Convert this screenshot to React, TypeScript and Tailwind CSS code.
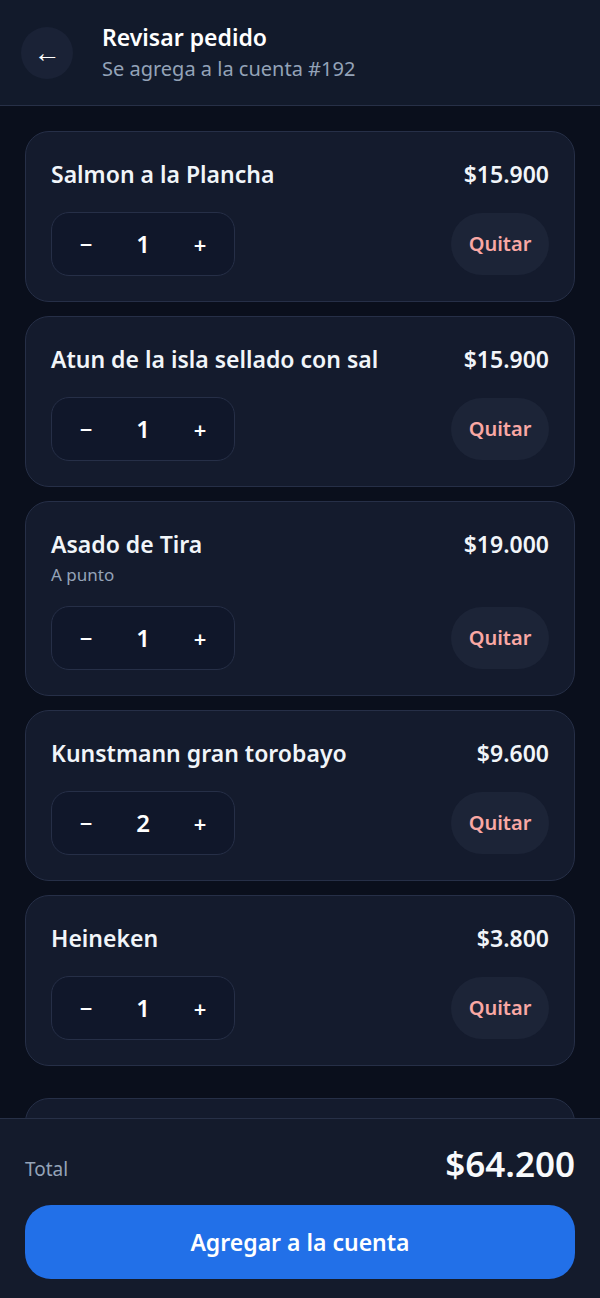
interface Item {
  name: string
  note?: string
  price: string
  qty: number
}

const ITEMS: Item[] = [
  { name: 'Salmon a la Plancha', price: '$15.900', qty: 1 },
  { name: 'Atun de la isla sellado con sal', price: '$15.900', qty: 1 },
  { name: 'Asado de Tira', note: 'A punto', price: '$19.000', qty: 1 },
  { name: 'Kunstmann gran torobayo', price: '$9.600', qty: 2 },
  { name: 'Heineken', price: '$3.800', qty: 1 },
]

function ItemCard({ item }: { item: Item }) {
  return (
    <div className="rounded-[24px] border border-[#262f47] bg-[#141b2d] px-[25px] pt-[28px] pb-[25px]">
      <div className="flex items-start justify-between gap-4">
        <div>
          <div className="text-[23px] font-semibold leading-[28px] text-[#f1f5f9]">{item.name}</div>
          {item.note && <div className="mt-[6px] text-[17px] leading-[22px] text-[#94a3b8]">{item.note}</div>}
        </div>
        <div className="text-[23px] font-semibold leading-[28px] text-[#f1f5f9]">{item.price}</div>
      </div>
      <div className={`flex items-center justify-between ${item.note ? 'mt-[20px]' : 'mt-[24px]'}`}>
        <div className="flex h-[64px] w-[184px] items-center justify-between rounded-[18px] border border-[#262f47] bg-[#10172a] px-[22px] text-white">
          <span className="w-6 text-center text-[22px] font-semibold">−</span>
          <span className="text-[24px] font-semibold">{item.qty}</span>
          <span className="w-6 text-center text-[22px] font-semibold">+</span>
        </div>
        <button className="h-[62px] w-[98px] rounded-full bg-[#1c2437] text-[20px] font-semibold text-[#f9a8a4]">
          Quitar
        </button>
      </div>
    </div>
  )
}

export default function App() {
  return (
    <div
      className="flex h-[1298px] flex-col overflow-hidden bg-[#0a0f1c]"
      style={{ fontFamily: '"Noto Sans", "Open Sans", sans-serif' }}
    >
      {/* Header */}
      <header className="flex h-[106px] shrink-0 items-center gap-[29px] border-b border-[#273047] bg-[#121a2b] px-[21px]">
        <button className="flex h-[52px] w-[52px] items-center justify-center rounded-full bg-[#1a2236] pb-[3px] text-[27px] leading-none text-white">
          ←
        </button>
        <div className="flex flex-col">
          <span className="text-[23px] font-semibold leading-[30px] text-white">Revisar pedido</span>
          <span className="mt-[3px] text-[20px] leading-[28px] text-[#94a3b8]">Se agrega a la cuenta #192</span>
        </div>
      </header>

      {/* Items */}
      <main className="flex-1 overflow-hidden px-[25px] pt-[25px]">
        <div className="flex flex-col gap-[14px]">
          {ITEMS.map((item) => (
            <ItemCard key={item.name} item={item} />
          ))}
        </div>
        <div className="mt-[32px] h-[120px] rounded-[24px] border border-[#262f47] bg-[#141b2d]" />
      </main>

      {/* Footer */}
      <footer className="shrink-0 border-t border-[#273047] bg-[#141b2c] px-[25px] pt-[24px] pb-[19px]">
        <div className="flex items-end justify-between">
          <span className="pb-[2px] text-[19px] text-[#94a3b8]">Total</span>
          <span className="text-[35px] font-semibold leading-[42px] text-[#f8fafc]">$64.200</span>
        </div>
        <button className="mt-[20px] h-[74px] w-full rounded-[26px] bg-[#2270e8] text-[23px] font-semibold text-white">
          Agregar a la cuenta
        </button>
      </footer>
    </div>
  )
}
